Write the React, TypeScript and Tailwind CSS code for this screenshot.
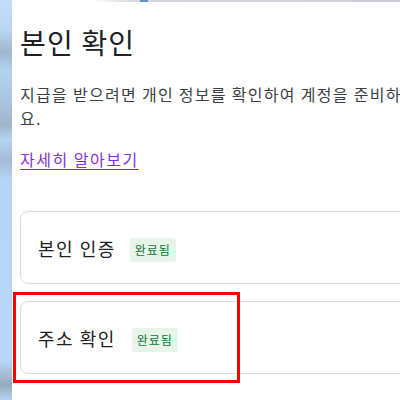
export default function App() {
  const font = { fontFamily: '"Noto Sans CJK KR", "Noto Sans", sans-serif' }

  return (
    <div className="relative flex h-[400px] w-[400px] overflow-hidden bg-white" style={font}>
      {/* blurred window edge on the left */}
      <div className="h-full w-[12px] shrink-0 bg-[linear-gradient(180deg,#c4def8_0px,#b9d6f4_30px,#9fb6cc_52px,#b3d2f2_70px,#a9c3dd_105px,#9fb5ca_125px,#b5d4f4_140px,#a3bbd3_160px,#b6d5f6_180px,#b8d7f7_360px,#97aabd_385px,#b4d3f3_400px)]" />

      <div className="relative flex-1">
        {/* thin header edge */}
        <div className="absolute left-0 top-0 h-[2px] w-full bg-[linear-gradient(90deg,transparent_80px,#d5d8de_120px,#c9ccd3_100%)]" />
        <div className="absolute left-[128px] top-0 h-[2px] w-[8px] bg-[#5b8fd6]" />

        <div className="w-[460px] pl-[8px] pt-[22px]">
          <h1 className="text-[28px] font-normal leading-[40px] tracking-[1.2px] text-[#202124]">본인 확인</h1>

          <p className="mt-[20px] w-[402px] text-[16px] leading-[24px] tracking-[1.3px] text-[#3c4043]">
            지급을 받으려면 개인 정보를 확인하여 계정을 준비하세요.
          </p>

          <a href="#" className="mt-[17px] inline-block text-[16px] leading-[24px] tracking-[1.5px] text-[#8134d4] underline underline-offset-[3px]">
            자세히 알아보기
          </a>

          <div className="mt-[40px] flex flex-col gap-[17px]">
            <div className="flex h-[73px] items-center rounded-[8px] border border-[#dadce0] pl-[17px]">
              <span className="text-[18px] leading-[24px] tracking-[1.5px] text-[#202124]">본인 인증</span>
              <span className="ml-[14px] mt-[4px] rounded-[3px] bg-[#e6f4ea] px-[5px] py-[4px] text-[12px] leading-[16px] tracking-[1px] text-[#137333]">
                완료됨
              </span>
            </div>
            <div className="flex h-[73px] items-center rounded-[8px] border border-[#dadce0] pl-[17px]">
              <span className="text-[18px] leading-[24px] tracking-[1.5px] text-[#202124]">주소 확인</span>
              <span className="ml-[16px] mt-[4px] rounded-[3px] bg-[#e6f4ea] px-[5px] py-[4px] text-[12px] leading-[16px] tracking-[1px] text-[#137333]">
                완료됨
              </span>
            </div>
          </div>
        </div>

        {/* highlight annotation */}
        <div className="absolute left-[1px] top-[292px] h-[91px] w-[227px] border-[3px] border-[#ff0000]" />
      </div>
    </div>
  )
}
